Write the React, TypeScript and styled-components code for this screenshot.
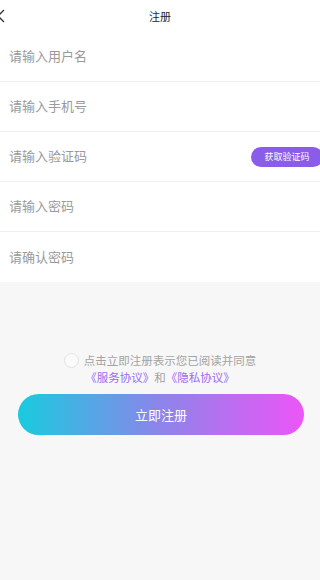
import styled, { createGlobalStyle } from "styled-components";

const GlobalStyle = createGlobalStyle`
  body {
    margin: 0;
    background: #f7f7f7;
    font-family: "Noto Sans CJK SC", "Noto Sans", sans-serif;
  }
`;

const fields = [
  "请输入用户名",
  "请输入手机号",
  "请输入验证码",
  "请输入密码",
  "请确认密码",
];

const App = () => {
  return (
    <Page>
      <GlobalStyle />
      <Header>
        <Back viewBox="0 0 12 16" width={12} height={16}>
          <path d="M9 2 L3 8 L9 14" fill="none" stroke="#333" strokeWidth="1.3" />
        </Back>
        <Title>注册</Title>
      </Header>

      <Form>
        {fields.map((label, index) => (
          <Row key={label}>
            <Placeholder>{label}</Placeholder>
            {index === 2 && <CodeButton>获取验证码</CodeButton>}
          </Row>
        ))}
      </Form>

      <Agreement>
        <AgreeLine>
          <Circle />
          点击立即注册表示您已阅读并同意
        </AgreeLine>
        <AgreeLine>
          <LinkText>《服务协议》</LinkText>和<LinkText>《隐私协议》</LinkText>
        </AgreeLine>
      </Agreement>

      <Submit>立即注册</Submit>
    </Page>
  );
};

export default App;

const Page = styled.div`
  width: 320px;
  min-height: 580px;
  background: #f7f7f7;
`;

const Header = styled.div`
  position: relative;
  height: 32px;
  background: #fff;
  display: flex;
  align-items: center;
  justify-content: center;
`;

const Back = styled.svg`
  position: absolute;
  left: -5px;
  top: 8px;
`;

const Title = styled.div`
  font-size: 11px;
  color: #222;
`;

const Form = styled.div`
  background: #fff;
`;

const Row = styled.div`
  box-sizing: border-box;
  height: 50px;
  padding: 0 0 2px 9px;
  border-bottom: 1px solid #f0f0f0;
  display: flex;
  align-items: center;
  justify-content: space-between;

  &:last-child {
    border-bottom: none;
  }
`;

const Placeholder = styled.span`
  font-size: 13px;
  color: #9a9a9a;
`;

const CodeButton = styled.div`
  height: 20px;
  width: 72px;
  margin-right: -3px;
  margin-top: 2px;
  border-radius: 10px;
  background: #8a5ce9;
  color: #fff;
  font-size: 9px;
  display: flex;
  align-items: center;
  justify-content: center;
`;

const Agreement = styled.div`
  margin-top: 70px;
  display: grid;
  justify-items: center;
`;

const AgreeLine = styled.div`
  display: flex;
  align-items: center;
  font-size: 11.5px;
  line-height: 17px;
  color: #a3a3a3;
`;

const Circle = styled.span`
  width: 13px;
  height: 13px;
  border-radius: 50%;
  border: 1px solid #e2e2e2;
  background: #fafafa;
  margin-right: 5px;
`;

const LinkText = styled.span`
  color: #9b6cf0;
`;

const Submit = styled.div`
  margin: 8px 16px 0 18px;
  height: 41px;
  border-radius: 21px;
  background: linear-gradient(90deg, #18cbdf 0%, #8d84ea 50%, #ec55f7 100%);
  color: #fff;
  font-size: 13px;
  display: flex;
  align-items: center;
  justify-content: center;
`;
